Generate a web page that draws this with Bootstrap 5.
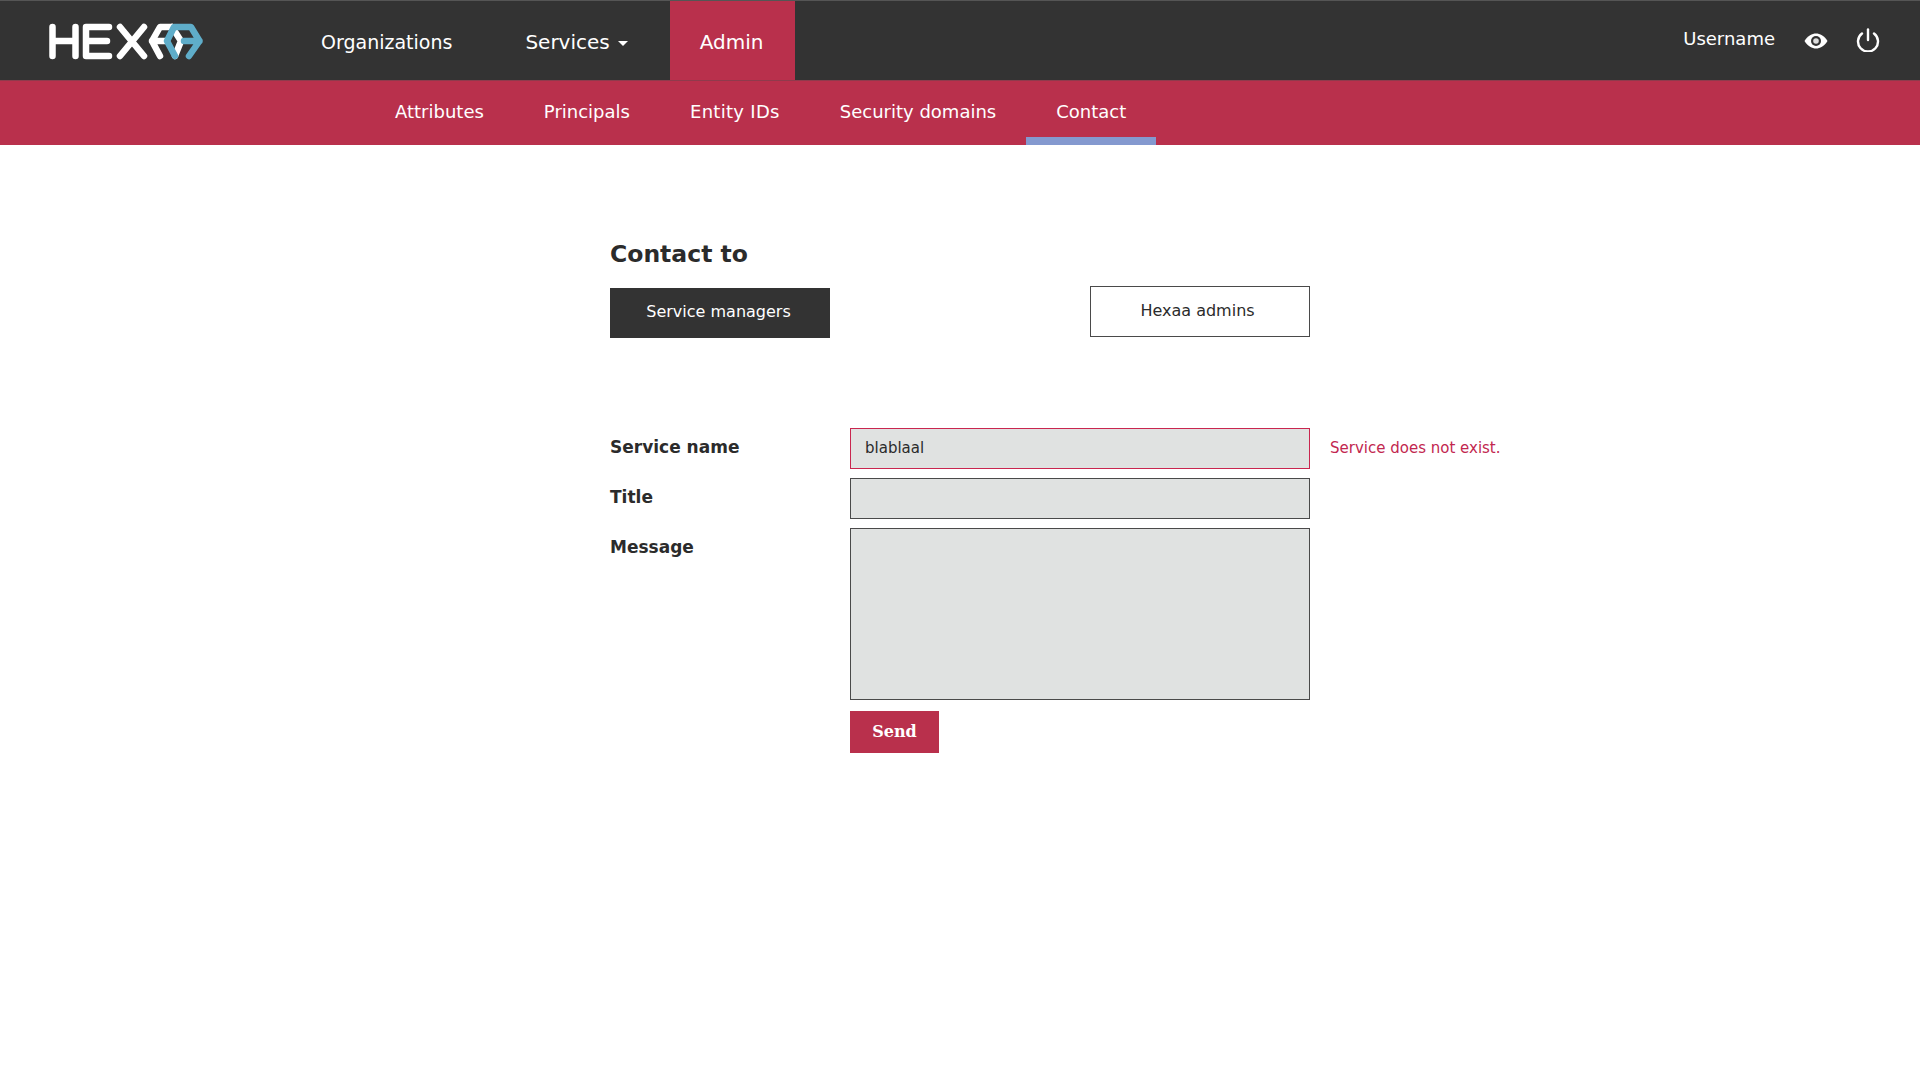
<!DOCTYPE html>
<html lang="en">
<head>
  <meta charset="UTF-8">
  <title>Hexaa</title>
  <link href="https://cdn.jsdelivr.net/npm/bootstrap@5.3.1/dist/css/bootstrap.min.css" rel="stylesheet">
  <style>
    body { font-family: "DejaVu Sans", sans-serif; color: #2b2b2b; background: #fff; }
    .top-bar { height: 80px; background: #333; border-top: 1px solid #555; color: #fff; padding-left: 49px; padding-right: 40px; }
    .logo-wrap { width: 242px; }
    .top-link { color: #fff; font-size: 20px; text-decoration: none; padding: 2px 30px 0; height: 79px; display: flex; align-items: center; }
    .top-link:hover { color: #fff; }
    .top-link.is-on { background: #b9304c; width: 125px; }
    .top-link.spaced { margin-right: 13px; font-size: 19px; padding-top: 3px; }
    .caret-mark { width: 0; height: 0; border-left: 5px solid transparent; border-right: 5px solid transparent; border-top: 5px solid #fff; margin-left: 8px; margin-right: 12px; margin-top: 3px; }
    .user-name { font-size: 18px; margin-right: 29px; margin-bottom: 4px; }
    .eye-icon { margin-right: 28px; }
    .power-icon { margin-bottom: 1px; }
    .sub-bar { height: 65px; background: #b9304c; padding-left: 365px; border-top: 1px solid #8f3a4c; }
    .sub-link { color: #fff; font-size: 18px; text-decoration: none; padding: 6px 30px 0; height: 65px; display: flex; align-items: center; margin-top: -1px; border-bottom: 8px solid transparent; }
    .sub-link:hover { color: #fff; }
    .sub-link.is-on { border-bottom-color: #8499cf; }
    .sub-link.wide-text { letter-spacing: .3px; }
    .contact-pane { width: 700px; margin: 0 auto; padding-top: 92px; }
    .contact-title { font-size: 23.5px; font-weight: 700; line-height: 34px; margin: 0 0 17px; }
    .target-row { height: 140px; }
    .target-btn { width: 220px; height: 50px; border-radius: 0; font-size: 16px; display: flex; align-items: center; justify-content: center; padding-top: 0; padding-bottom: 2px; }
    .target-btn.on-dark { background: #333; color: #fff; border: 0; padding-right: 9px; }
    .target-btn.on-light { background: #fff; color: #2b2b2b; border: 1px solid #4a4a4a; margin-top: -2px; height: 51px; padding-right: 11px; }
    .form-label-col { width: 240px; font-weight: 700; font-size: 17px; padding-top: 7px; line-height: 24px; flex-shrink: 0; }
    .field-box { width: 460px; height: 41px; flex-shrink: 0; background: #e0e2e1; border: 1px solid #4a4a4a; border-radius: 0; padding: 0 14px 1px; font-size: 15px; color: #2b2b2b; display: block; outline: none; }
    textarea.field-box { height: 172px; resize: none; padding-top: 8px; }
    .field-box.has-error { border-color: #c9264f; }
    .error-text { color: #c2274f; font-size: 15px; margin-left: 20px; white-space: nowrap; flex-shrink: 0; align-self: center; }
    .field-row { margin-bottom: 9px; }
    .send-btn { margin-left: 240px; margin-top: 11px; width: 89px; height: 42px; background: #b9304c; color: #fff; border: 0; border-radius: 0; font-family: "DejaVu Serif", serif; font-weight: 700; font-size: 16px; padding: 0; }
  </style>
</head>
<body>
  <nav class="top-bar d-flex align-items-center">
    <div class="logo-wrap">
      <svg width="156" height="38" viewBox="49 21 156 38" fill="none" stroke-linecap="round" stroke-linejoin="round" class="d-block">
        <g stroke="#fff" stroke-width="6.500">
          <path d="M52.500 26V55M75.500 26V55M52.500 40H75.500"/>
          <path d="M109 26H86V55H109M86 40H107"/>
          <path d="M120 26L144 55M144 26L120 55"/>
          <path d="M172 26H160L152 40L160 55M152 40H167"/>
          <path d="M172 26L181 40L175 55"/>
        </g>
        <path d="M175 55L167 40L174 26H191L199.500 40L189 55M184 40H199.500" stroke="#5fadc9" stroke-width="6.500"/>
      </svg>
    </div>
    <a class="top-link spaced" href="#">Organizations</a>
    <a class="top-link" href="#">Services<span class="caret-mark"></span></a>
    <a class="top-link is-on" href="#">Admin</a>
    <div class="ms-auto d-flex align-items-center">
      <span class="user-name">Username</span>
      <svg width="24" height="24" viewBox="0 0 24 24" class="eye-icon"><path d="M.5 12C4 6.500 8 4.500 12 4.500S20 6.500 23.500 12C20 17.500 16 19.500 12 19.500S4 17.500 .5 12Z" fill="#fff"/><circle cx="12" cy="12" r="5" fill="#333"/><circle cx="12" cy="12" r="2.800" fill="#ddd"/></svg>
      <svg width="24" height="24" viewBox="0 0 24 24" fill="none" stroke="#fff" stroke-width="2.400" stroke-linecap="round" class="power-icon"><path d="M12 1.500V12"/><path d="M6 5.500A10 10 0 1 0 18 5.500"/></svg>
    </div>
  </nav>
  <div class="sub-bar d-flex">
    <a class="sub-link" href="#">Attributes</a>
    <a class="sub-link" href="#">Principals</a>
    <a class="sub-link wide-text" href="#">Entity IDs</a>
    <a class="sub-link" href="#">Security domains</a>
    <a class="sub-link is-on" href="#">Contact</a>
  </div>
  <main class="contact-pane">
    <h1 class="contact-title">Contact to</h1>
    <div class="target-row d-flex justify-content-between">
      <button class="target-btn on-dark" type="button">Service managers</button>
      <button class="target-btn on-light" type="button">Hexaa admins</button>
    </div>
    <form onsubmit="return false">
      <div class="field-row d-flex">
        <label class="form-label-col" for="serviceName">Service name</label>
        <input class="field-box has-error" id="serviceName" type="text" value="blablaal">
        <span class="error-text">Service does not exist.</span>
      </div>
      <div class="field-row d-flex">
        <label class="form-label-col" for="title">Title</label>
        <input class="field-box" id="title" type="text">
      </div>
      <div class="field-row d-flex">
        <label class="form-label-col" for="message">Message</label>
        <textarea class="field-box" id="message"></textarea>
      </div>
      <button class="send-btn d-block" type="submit">Send</button>
    </form>
  </main>
  <script src="https://cdn.jsdelivr.net/npm/bootstrap@5.3.1/dist/js/bootstrap.bundle.min.js"></script>
</body>
</html>
